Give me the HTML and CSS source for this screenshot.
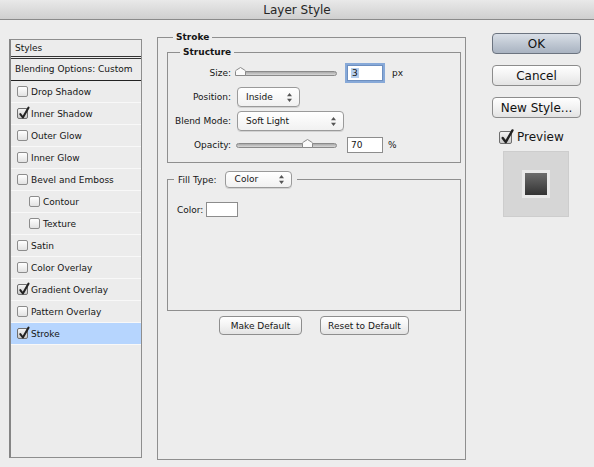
FILE: index.html
```html
<!DOCTYPE html>
<html lang="en">
<head>
    <meta charset="UTF-8">
    <title>Layer Style</title>
    <link rel="stylesheet" href="styles.css">
</head>
<body>
    <div class="titleBar">Layer Style</div>
    <div class="main">
        <div class="styleList">
            <div class="listHead">Styles</div>
            <div class="listBlend">Blending Options: Custom</div>
            <div class="listRow"><span class="cb"></span>Drop Shadow</div>
            <div class="listRow"><span class="cb on"><svg viewBox="0 0 12 12"><path d="M2.5 5.5 L5.3 9.3 L11.5 -1.5"/></svg></span>Inner Shadow</div>
            <div class="listRow"><span class="cb"></span>Outer Glow</div>
            <div class="listRow"><span class="cb"></span>Inner Glow</div>
            <div class="listRow"><span class="cb"></span>Bevel and Emboss</div>
            <div class="listRow sub"><span class="cb"></span>Contour</div>
            <div class="listRow sub"><span class="cb"></span>Texture</div>
            <div class="listRow"><span class="cb"></span>Satin</div>
            <div class="listRow"><span class="cb"></span>Color Overlay</div>
            <div class="listRow"><span class="cb on"><svg viewBox="0 0 12 12"><path d="M2.5 5.5 L5.3 9.3 L11.5 -1.5"/></svg></span>Gradient Overlay</div>
            <div class="listRow"><span class="cb"></span>Pattern Overlay</div>
            <div class="listRow selected"><span class="cb on"><svg viewBox="0 0 12 12"><path d="M2.5 5.5 L5.3 9.3 L11.5 -1.5"/></svg></span>Stroke</div>
        </div>

        <fieldset class="strokeGroup">
            <legend class="bold outerLegend">Stroke</legend>
            <fieldset class="structure">
                <legend class="bold innerLegend">Structure</legend>
                <div class="grid">
                    <div class="lbl">Size:</div>
                    <div class="ctl">
                        <div class="slider"><svg class="thumb" style="left:-2px" width="11" height="9" viewBox="0 0 11 9"><path d="M0.5 8.5 V4.5 Q0.5 3.5 1.5 3 L5.5 0.5 L9.5 3 Q10.5 3.5 10.5 4.5 V8.5 Z"/></svg></div>
                        <div class="numBox focus"><span class="sel">3</span></div>
                        <span class="unit px">px</span>
                    </div>
                    <div class="lbl">Position:</div>
                    <div class="ctl">
                        <div class="pop posPop">Inside<svg class="arrows" width="5" height="9" viewBox="0 0 5 9"><path d="M2.5 0 L5 3.2 H0 Z M2.5 9 L5 5.8 H0 Z"/></svg></div>
                    </div>
                    <div class="lbl">Blend Mode:</div>
                    <div class="ctl">
                        <div class="pop blendPop">Soft Light<svg class="arrows" width="5" height="9" viewBox="0 0 5 9"><path d="M2.5 0 L5 3.2 H0 Z M2.5 9 L5 5.8 H0 Z"/></svg></div>
                    </div>
                    <div class="lbl">Opacity:</div>
                    <div class="ctl">
                        <div class="slider"><svg class="thumb" style="left:65px" width="11" height="9" viewBox="0 0 11 9"><path d="M0.5 8.5 V4.5 Q0.5 3.5 1.5 3 L5.5 0.5 L9.5 3 Q10.5 3.5 10.5 4.5 V8.5 Z"/></svg></div>
                        <div class="numBox">70</div>
                        <span class="unit pct">%</span>
                    </div>
                </div>
            </fieldset>

            <fieldset class="fillGroup">
                <legend class="fillLegend">
                    <span>Fill Type:</span>
                    <div class="pop fillPop">Color<svg class="arrows" width="5" height="9" viewBox="0 0 5 9"><path d="M2.5 0 L5 3.2 H0 Z M2.5 9 L5 5.8 H0 Z"/></svg></div>
                </legend>
                <div class="fillBody">
                    <div class="colorRow">Color:<span class="swatch"></span></div>
                </div>
            </fieldset>

            <div class="defaults">
                <button type="button" class="btn makeDefault">Make Default</button>
                <button type="button" class="btn resetDefault">Reset to Default</button>
            </div>
        </fieldset>

        <div class="sideCol">
            <button type="button" class="bigBtn okBtn">OK</button>
            <button type="button" class="bigBtn">Cancel</button>
            <button type="button" class="bigBtn">New Style...</button>
            <div class="previewRow"><span class="cb big on"><svg viewBox="0 0 12 12"><path d="M2.5 5.5 L5.3 9.3 L11.5 -1.5"/></svg></span>Preview</div>
            <div class="previewBox"><div class="previewSwatch"></div></div>
        </div>
    </div>
</body>
</html>
```

FILE: styles.css
```css
body{
    margin: 0;
    background-color: #ededed;
    font-family: "DejaVu Sans", sans-serif;
    font-size: 9px;
    color: #151515;
    width: 594px;
    height: 467px;
    overflow: hidden;
}
.titleBar{
    height: 19px;
    line-height: 20px;
    border-bottom: 1px solid #8a8a8a;
    background: linear-gradient(#e9e9e9, #cfcfcf);
    text-align: center;
    font-size: 12px;
    color: #262626;
}
.main{
    display: flex;
    align-items: flex-start;
    padding-left: 9px;
}
.bold{
    font-weight: bold;
}

/* left list */
.styleList{
    margin-top: 19px;
    width: 133px;
    height: 419px;
    box-sizing: border-box;
    border: 1px solid #8e8e8e;
    border-left: 2px solid #858585;
    background-color: #ececec;
}
.listHead{
    height: 16px;
    line-height: 16px;
    padding-left: 4px;
    border-bottom: 3px double #333;
}
.listBlend{
    height: 21px;
    line-height: 21px;
    padding-left: 4px;
    border-bottom: 1px solid #222;
}
.listRow{
    height: 21px;
    border-bottom: 1px solid #f8f8f8;
    display: flex;
    align-items: center;
    padding-left: 6px;
}
.listRow.sub{
    padding-left: 18px;
}
.listRow.selected{
    background-color: #b6d5fe;
}
.cb{
    position: relative;
    width: 11px;
    height: 11px;
    box-sizing: border-box;
    border: 1px solid #8c8c8c;
    border-radius: 2px;
    background: linear-gradient(#ffffff, #e2e2e2);
    margin-right: 3px;
    flex-shrink: 0;
}
.cb.on{
    border-color: #6e6e6e;
    background: linear-gradient(#f4f4f4, #c9c9c9);
}
.cb svg{
    position: absolute;
    left: 0;
    top: 0;
    width: 11px;
    height: 11px;
    overflow: visible;
}
.cb path{
    fill: none;
    stroke: #222;
    stroke-width: 2.2;
    stroke-linecap: round;
    stroke-linejoin: round;
}

/* middle */
.strokeGroup{
    margin: 11px 0 0 15px;
    padding: 0 4px 0 9px;
    width: 309px;
    height: 429px;
    box-sizing: border-box;
    border: 1px solid #8f8f8f;
}
fieldset legend{
    padding: 0 3px;
    line-height: 12px;
}
.outerLegend{
    margin-left: 6px;
}
.structure{
    margin: 3px 0 0 0;
    padding: 3px 0 5px 0;
    border: 1px solid #8f8f8f;
}
.innerLegend{
    margin-left: 12px;
}
.grid{
    display: grid;
    grid-template-columns: 63px auto;
    column-gap: 5px;
    grid-auto-rows: 24px;
    align-items: center;
}
.lbl{
    text-align: right;
}
.ctl{
    display: flex;
    align-items: center;
}
.slider{
    position: relative;
    width: 101px;
    height: 5px;
    box-sizing: border-box;
    border: 1px solid #8a8a8a;
    border-radius: 3px;
    background: linear-gradient(#a9a9a9, #d8d8d8);
}
.thumb{
    position: absolute;
    top: -5px;
}
.thumb path{
    fill: #fbfbfb;
    stroke: #8a8a8a;
}
.numBox{
    margin-left: 10px;
    width: 36px;
    height: 16px;
    box-sizing: border-box;
    border: 1px solid #8d8d8d;
    background-color: #fff;
    line-height: 14px;
    padding-left: 3px;
}
.numBox.focus{
    box-shadow: 0 0 0 2px #87a9d8;
    border-color: #6d8fc0;
}
.sel{
    background-color: #b4cdec;
    padding: 0 1px;
}
.unit.px{
    margin-left: 9px;
}
.unit.pct{
    margin-left: 5px;
}
.pop{
    position: relative;
    height: 20px;
    box-sizing: border-box;
    border: 1px solid #9a9a9a;
    border-radius: 4px;
    background: linear-gradient(#ffffff, #f1f1f1);
    box-shadow: 0 1px 0 #d2d2d2;
    line-height: 18px;
    padding-left: 8px;
    display: flex;
    align-items: center;
    justify-content: space-between;
    padding-right: 7px;
}
.posPop{
    margin-left: 1px;
    width: 63px;
}
.blendPop{
    margin-left: 1px;
    width: 107px;
}
.arrows path{
    fill: #555;
}
.fillGroup{
    margin: 8px 0 0 0;
    padding: 0;
    border: 1px solid #8f8f8f;
}
.fillLegend{
    margin-left: 6px;
    padding: 0 5px 0 4px;
    display: flex;
    align-items: center;
}
.fillPop{
    margin-left: 8px;
    width: 67px;
    height: 17px;
    line-height: 15px;
    padding-left: 9px;
}
.fillBody{
    height: 122px;
    padding: 14px 0 0 9px;
    box-sizing: border-box;
}
.colorRow{
    display: flex;
    align-items: center;
}
.swatch{
    margin-left: 3px;
    width: 32px;
    height: 15px;
    box-sizing: border-box;
    border: 1px solid #8c8c8c;
    background-color: #fff;
}
.defaults{
    display: flex;
    justify-content: center;
    gap: 18px;
    margin-top: 5px;
}
.btn{
    height: 19px;
    padding: 0;
    font-family: "DejaVu Sans", sans-serif;
    font-size: 9px;
    color: #151515;
    border: 1px solid #8e8e8e;
    border-radius: 4px;
    background: linear-gradient(#ffffff, #f3f3f3 50%, #e4e4e4);
}
.makeDefault{
    width: 83px;
}
.resetDefault{
    width: 89px;
}

/* right column */
.sideCol{
    margin: 13px 0 0 26px;
    display: flex;
    flex-direction: column;
}
.bigBtn{
    width: 89px;
    height: 21px;
    margin-bottom: 11px;
    padding: 0;
    font-family: "DejaVu Sans", sans-serif;
    font-size: 12px;
    color: #111;
    border: 1px solid #8c8c8c;
    border-radius: 4px;
    background: linear-gradient(#ffffff, #f2f2f2 50%, #e3e3e3);
}
.okBtn{
    border-color: #6c7480;
    background: linear-gradient(#d9dfe7, #c0c8d3 50%, #a9b3c1);
}
.previewRow{
    margin-top: 1px;
    padding-left: 7px;
    display: flex;
    align-items: center;
    font-size: 12px;
    height: 14px;
}
.cb.big{
    width: 13px;
    height: 13px;
    margin-right: 5px;
}
.cb.big svg{
    width: 13px;
    height: 13px;
}
.previewBox{
    margin: 7px 0 0 11px;
    width: 66px;
    height: 66px;
    box-sizing: border-box;
    border: 1px solid #cdcdcd;
    background-color: #d6d6d6;
    display: flex;
    align-items: center;
    justify-content: center;
}
.previewSwatch{
    width: 28px;
    height: 28px;
    box-sizing: border-box;
    border: 3px solid #e9e9e9;
    background: linear-gradient(#6c6c6c, #333333);
}
```
